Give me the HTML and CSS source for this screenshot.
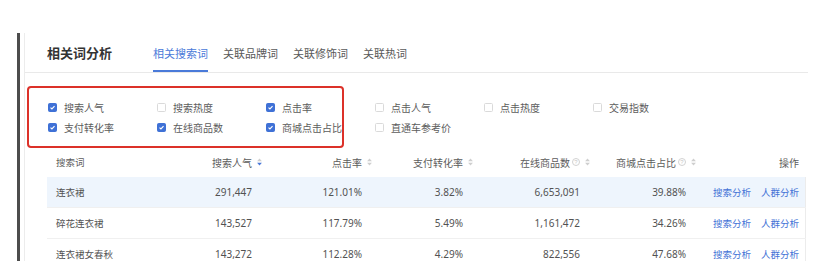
FILE: index.html
```html
<!DOCTYPE html>
<html lang="zh-CN">
<head>
<meta charset="utf-8">
<title>相关词分析</title>
<link rel="stylesheet" href="styles.css">
</head>
<body>
<div class="frame">
  <div class="panel">
    <div class="head">
      <div class="title">相关词分析</div>
      <div class="tabs">
        <div class="tab active">相关搜索词</div>
        <div class="tab">关联品牌词</div>
        <div class="tab">关联修饰词</div>
        <div class="tab">关联热词</div>
      </div>
    </div>

    <div class="filters">
      <div class="mark"></div>
      <label class="opt"><span class="cb on"><svg viewBox="0 0 10 10"><path d="M2.2 5.1 4.2 7.1 7.9 3.1"/></svg></span>搜索人气</label>
      <label class="opt"><span class="cb"></span>搜索热度</label>
      <label class="opt"><span class="cb on"><svg viewBox="0 0 10 10"><path d="M2.2 5.1 4.2 7.1 7.9 3.1"/></svg></span>点击率</label>
      <label class="opt"><span class="cb"></span>点击人气</label>
      <label class="opt"><span class="cb"></span>点击热度</label>
      <label class="opt"><span class="cb"></span>交易指数</label>
      <label class="opt"><span class="cb on"><svg viewBox="0 0 10 10"><path d="M2.2 5.1 4.2 7.1 7.9 3.1"/></svg></span>支付转化率</label>
      <label class="opt"><span class="cb on"><svg viewBox="0 0 10 10"><path d="M2.2 5.1 4.2 7.1 7.9 3.1"/></svg></span>在线商品数</label>
      <label class="opt"><span class="cb on"><svg viewBox="0 0 10 10"><path d="M2.2 5.1 4.2 7.1 7.9 3.1"/></svg></span>商城点击占比</label>
      <label class="opt"><span class="cb"></span>直通车参考价</label>
    </div>

    <div class="table">
      <div class="row thead">
        <div class="c left">搜索词</div>
        <div class="c num">搜索人气<svg class="sort" viewBox="0 0 6 10"><path class="up" d="M0 4 3 0.5 6 4z"/><path class="dn act" d="M0 6 3 9.5 6 6z"/></svg></div>
        <div class="c num">点击率<svg class="sort" viewBox="0 0 6 10"><path class="up" d="M0 4 3 0.5 6 4z"/><path class="dn" d="M0 6 3 9.5 6 6z"/></svg></div>
        <div class="c num">支付转化率<svg class="sort" viewBox="0 0 6 10"><path class="up" d="M0 4 3 0.5 6 4z"/><path class="dn" d="M0 6 3 9.5 6 6z"/></svg></div>
        <div class="c num">在线商品数<span class="q">?</span><svg class="sort" viewBox="0 0 6 10"><path class="up" d="M0 4 3 0.5 6 4z"/><path class="dn" d="M0 6 3 9.5 6 6z"/></svg></div>
        <div class="c num">商城点击占比<span class="q">?</span><svg class="sort" viewBox="0 0 6 10"><path class="up" d="M0 4 3 0.5 6 4z"/><path class="dn" d="M0 6 3 9.5 6 6z"/></svg></div>
        <div class="c num last">操作</div>
      </div>
      <div class="row body hl">
        <div class="c left">连衣裙</div>
        <div class="c num">291,447</div>
        <div class="c num">121.01%</div>
        <div class="c num">3.82%</div>
        <div class="c num">6,653,091</div>
        <div class="c num">39.88%</div>
        <div class="c num last ops"><a>搜索分析</a><a>人群分析</a></div>
      </div>
      <div class="row body">
        <div class="c left">碎花连衣裙</div>
        <div class="c num">143,527</div>
        <div class="c num">117.79%</div>
        <div class="c num">5.49%</div>
        <div class="c num">1,161,472</div>
        <div class="c num">34.26%</div>
        <div class="c num last ops"><a>搜索分析</a><a>人群分析</a></div>
      </div>
      <div class="row body">
        <div class="c left">连衣裙女春秋</div>
        <div class="c num">143,272</div>
        <div class="c num">112.28%</div>
        <div class="c num">4.29%</div>
        <div class="c num">822,556</div>
        <div class="c num">47.68%</div>
        <div class="c num last ops"><a>搜索分析</a><a>人群分析</a></div>
      </div>
    </div>
  </div>
</div>
</body>
</html>
```

FILE: styles.css
```css
* { box-sizing: border-box; }
html, body { margin: 0; padding: 0; background: #fff; }
body {
  font-family: "Noto Sans", "Noto Sans CJK SC", sans-serif;
  color: #444;
  overflow: hidden;
  height: 261px;
}
.frame {
  margin: 33px 0 0 17px;
  border-left: 3px solid #4d4d4d;
  padding-left: 4px;
  height: 240px;
  width: 791px;
}
.panel {
  position: relative;
  border-left: 1px solid #ececec;
  height: 100%;
}
.head {
  display: flex;
  align-items: stretch;
  height: 40px;
  border-bottom: 1px solid #e9e9e9;
  padding-left: 22px;
}
.title {
  display: flex;
  align-items: center;
  font-family: "Noto Sans CJK SC", sans-serif;
  font-size: 13px;
  font-weight: 700;
  color: #333;
}
.tabs {
  display: flex;
  gap: 15px;
  margin-left: 41px;
}
.tab {
  display: flex;
  align-items: center;
  padding-top: 2px;
  font-family: "Noto Sans CJK SC", sans-serif;
  font-size: 11px;
  color: #595959;
  border-bottom: 2px solid transparent;
}
.tab.active {
  color: #4a7ad9;
  border-bottom-color: #4a7ad9;
}

.filters {
  position: relative;
  display: grid;
  grid-template-columns: repeat(6, 109px);
  grid-auto-rows: 20px;
  padding: 24px 0 10px 23px;
}
.mark {
  position: absolute;
  left: 2px;
  top: 13px;
  width: 317px;
  height: 62px;
  border: 2px solid #dc3129;
  border-radius: 4px;
}
.opt {
  display: flex;
  align-items: center;
  gap: 7px;
  font-family: "Noto Sans CJK SC", sans-serif;
  font-size: 10px;
  color: #5c5c5c;
}
.cb {
  width: 9px;
  height: 9px;
  border: 1px solid #dadada;
  border-radius: 1.5px;
  background: #fff;
  flex: none;
  display: block;
}
.cb.on {
  background: #3f71d6;
  border-color: #3f71d6;
}
.cb svg {
  display: block;
  width: 7px;
  height: 7px;
}
.cb svg path {
  fill: none;
  stroke: #fff;
  stroke-width: 1.6;
}

.table {
  margin-left: 22px;
  width: 759px;
}
.row {
  display: grid;
  grid-template-columns: 100px 105px 110px 101px 117px 106px 120px;
  height: 30px;
  font-size: 10px;
}
.row.body {
  height: 31px;
  border-bottom: 1px solid #f0f0f0;
  box-shadow: inset -1px 0 0 #ececec;
}
.row.hl { background: #eef5fd; }
.c {
  display: flex;
  align-items: center;
  white-space: nowrap;
}
.c.left { padding-left: 9px; font-family: "Noto Sans CJK SC", sans-serif; font-size: 9.5px; }
.c.num { justify-content: flex-end; }
.c.last { padding-right: 7px; }
.thead .c {
  color: #5c5c5c;
  font-family: "Noto Sans CJK SC", sans-serif;
}
.body .c { color: #525252; }
.sort {
  width: 5px;
  height: 8px;
  margin-left: 5px;
  margin-right: -10px;
  flex: none;
}
.sort path { fill: #cfcfcf; }
.sort path.act { fill: #4a78d8; }
.q {
  width: 8px;
  height: 8px;
  margin-left: 2px;
  border: 1px solid #d2d2d2;
  border-radius: 50%;
  font-size: 6px;
  line-height: 6px;
  text-align: center;
  color: #c8c8c8;
  font-family: "Liberation Sans", sans-serif;
  flex: none;
}
.ops { gap: 10px; }
.body .ops a {
  color: #4372d6;
  font-family: "Noto Sans CJK SC", sans-serif;
  font-size: 9.5px;
  cursor: pointer;
}
```
